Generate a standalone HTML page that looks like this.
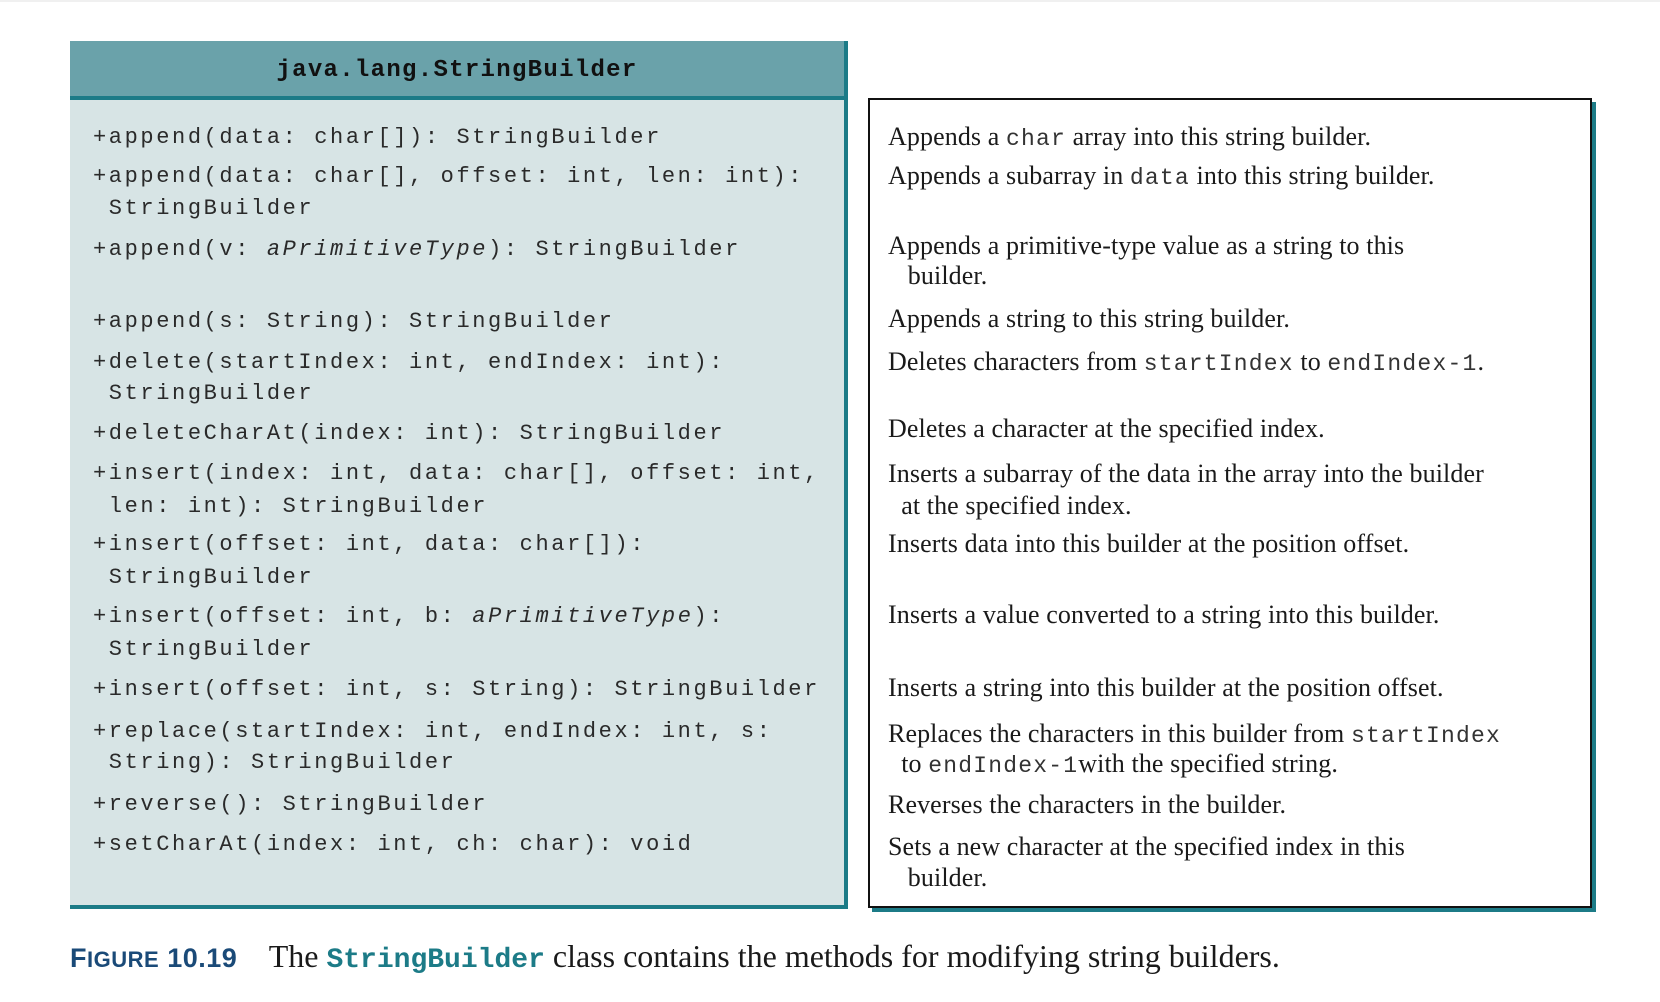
<!DOCTYPE html>
<html><head><meta charset="utf-8"><style>
body{margin:0;width:1660px;height:1002px;background:#fff;position:relative;overflow:hidden}
.topline{position:absolute;left:0;top:0;width:1660px;height:2px;background:#f0f0f0}
#lp{position:absolute;left:70px;top:41px;width:774px;height:864px;background:#d7e4e5;border-right:4px solid #1c7b87;border-bottom:4px solid #1c7b87}
#hd{position:absolute;left:0;top:0;width:774px;height:55px;background:#6aa2aa;border-bottom:4px solid #1c7b87;font:bold 24px "Liberation Mono",monospace;color:#111;text-align:center;line-height:60px;letter-spacing:1.3px}
.m{position:absolute;left:93px;font:22px/30px "Liberation Mono",monospace;letter-spacing:2.6px;color:#2a2a2a;white-space:pre}
.m i{font-style:italic}
#rp{position:absolute;left:868px;top:98px;width:720px;height:806px;border:2px solid #111;box-shadow:4px 4px 0 #1c7b87;background:#fff}
.s{position:absolute;left:888px;font:26px/30px "Liberation Serif",serif;color:#1a1a1a;white-space:pre;letter-spacing:0.1px}
.s code{font:23px "Liberation Mono",monospace;letter-spacing:1.2px;color:#333}
#cap{position:absolute;left:70px;top:938px;font:32px/36px "Liberation Serif",serif;color:#1a1a1a;white-space:pre}
#cap b{font:bold 27px "Liberation Sans",sans-serif;color:#1a4a78;letter-spacing:0.5px}
#cap code{font:bold 28px "Liberation Mono",monospace;color:#1c7b87}
</style></head><body>
<div class="topline"></div>
<div id="lp"><div id="hd">java.lang.StringBuilder</div></div>
<div class="m" style="top:123px">+append(data: char[]): StringBuilder</div>
<div class="m" style="top:162px">+append(data: char[], offset: int, len: int):</div>
<div class="m" style="top:194px"> StringBuilder</div>
<div class="m" style="top:235px">+append(v: <i>aPrimitiveType</i>): StringBuilder</div>
<div class="m" style="top:307px">+append(s: String): StringBuilder</div>
<div class="m" style="top:348px">+delete(startIndex: int, endIndex: int):</div>
<div class="m" style="top:379px"> StringBuilder</div>
<div class="m" style="top:419px">+deleteCharAt(index: int): StringBuilder</div>
<div class="m" style="top:459px">+insert(index: int, data: char[], offset: int,</div>
<div class="m" style="top:492px"> len: int): StringBuilder</div>
<div class="m" style="top:530px">+insert(offset: int, data: char[]):</div>
<div class="m" style="top:563px"> StringBuilder</div>
<div class="m" style="top:602px">+insert(offset: int, b: <i>aPrimitiveType</i>):</div>
<div class="m" style="top:635px"> StringBuilder</div>
<div class="m" style="top:675px">+insert(offset: int, s: String): StringBuilder</div>
<div class="m" style="top:717px">+replace(startIndex: int, endIndex: int, s:</div>
<div class="m" style="top:748px"> String): StringBuilder</div>
<div class="m" style="top:790px">+reverse(): StringBuilder</div>
<div class="m" style="top:830px">+setCharAt(index: int, ch: char): void</div>
<div id="rp"></div>
<div class="s" style="top:122px">Appends a <code>char</code> array into this string builder.</div>
<div class="s" style="top:161px">Appends a subarray in <code>data</code> into this string builder.</div>
<div class="s" style="top:231px">Appends a primitive-type value as a string to this</div>
<div class="s" style="top:261px">   builder.</div>
<div class="s" style="top:304px">Appends a string to this string builder.</div>
<div class="s" style="top:347px">Deletes characters from <code>startIndex</code> to <code>endIndex-1</code>.</div>
<div class="s" style="top:414px">Deletes a character at the specified index.</div>
<div class="s" style="top:459px">Inserts a subarray of the data in the array into the builder</div>
<div class="s" style="top:491px">  at the specified index.</div>
<div class="s" style="top:529px">Inserts data into this builder at the position offset.</div>
<div class="s" style="top:600px">Inserts a value converted to a string into this builder.</div>
<div class="s" style="top:673px">Inserts a string into this builder at the position offset.</div>
<div class="s" style="top:719px">Replaces the characters in this builder from <code>startIndex</code></div>
<div class="s" style="top:749px">  to <code>endIndex-1</code>with the specified string.</div>
<div class="s" style="top:790px">Reverses the characters in the builder.</div>
<div class="s" style="top:832px">Sets a new character at the specified index in this</div>
<div class="s" style="top:863px">   builder.</div>
<div id="cap"><b>F<span style="font-size:22px">IGURE</span> 10.19</b>    The <code>StringBuilder</code> class contains the methods for modifying string builders.</div>
</body></html>
